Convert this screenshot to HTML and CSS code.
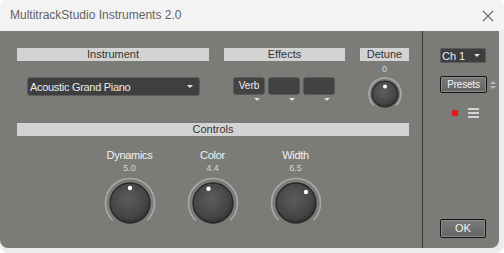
FILE: index.html
```html
<!DOCTYPE html>
<html>
<head>
<meta charset="utf-8">
<link rel="stylesheet" href="styles.css">
</head>
<body>
<div class="window">
  <div class="titlebar">
    <span class="title">MultitrackStudio Instruments 2.0</span>
    <svg class="close" width="12" height="12" viewBox="0 0 12 12"><path d="M1 1L11 11M11 1L1 11" stroke="#6a6a6a" stroke-width="1.1" fill="none"/></svg>
  </div>
  <div class="content">
    <div class="main">
      <div class="top">
        <div class="col">
          <div class="hdr">Instrument</div>
          <div class="select"><span>Acoustic Grand Piano</span><i class="tri"></i></div>
        </div>
        <div class="col">
          <div class="hdr">Effects</div>
          <div class="fx">
            <div class="fxslot"><div class="fxbtn">Verb</div><i class="tri"></i></div>
            <div class="fxslot"><div class="fxbtn"></div><i class="tri"></i></div>
            <div class="fxslot"><div class="fxbtn"></div><i class="tri"></i></div>
          </div>
        </div>
        <div class="col center">
          <div class="hdr">Detune</div>
          <div class="val small">0</div>
          <svg class="knob-s" width="34" height="34" viewBox="0 0 34 34">
            <defs>
              <radialGradient id="gs" cx="45%" cy="40%" r="60%"><stop offset="0" stop-color="#5e5e5e"/><stop offset="0.8" stop-color="#444"/><stop offset="1" stop-color="#303030"/></radialGradient>
            </defs>
            <path d="M5.7 28.3A16 16 0 1 1 28.3 28.3" stroke="#a9a9a9" stroke-width="1.6" fill="none"/>
            <circle cx="17" cy="17" r="13" fill="url(#gs)" stroke="#262626" stroke-width="1.2"/>
            <circle cx="17" cy="9.5" r="2" fill="#fff"/>
          </svg>
        </div>
      </div>
      <div class="hdr wide">Controls</div>
      <div class="knobs">
        <div class="kcol">
          <div class="klabel">Dynamics</div>
          <div class="val">5.0</div>
          <svg class="knob" width="52" height="52" viewBox="0 0 52 52">
            <defs>
              <radialGradient id="g1" cx="45%" cy="40%" r="62%"><stop offset="0" stop-color="#5c5c5c"/><stop offset="0.75" stop-color="#444"/><stop offset="1" stop-color="#2e2e2e"/></radialGradient>
            </defs>
            <path d="M8.7 43.3A24.5 24.5 0 1 1 43.3 43.3" stroke="#a8a8a8" stroke-width="1.6" fill="none"/>
            <circle cx="26" cy="26" r="20" fill="url(#g1)" stroke="#262626" stroke-width="1.3"/>
            <circle cx="26" cy="11" r="2.2" fill="#fff"/>
          </svg>
        </div>
        <div class="kcol">
          <div class="klabel">Color</div>
          <div class="val">4.4</div>
          <svg class="knob" width="52" height="52" viewBox="0 0 52 52">
            <path d="M8.7 43.3A24.5 24.5 0 1 1 43.3 43.3" stroke="#a8a8a8" stroke-width="1.6" fill="none"/>
            <circle cx="26" cy="26" r="20" fill="url(#g1)" stroke="#262626" stroke-width="1.3"/>
            <circle cx="21.5" cy="11.7" r="2.2" fill="#fff"/>
          </svg>
        </div>
        <div class="kcol">
          <div class="klabel">Width</div>
          <div class="val">6.5</div>
          <svg class="knob" width="52" height="52" viewBox="0 0 52 52">
            <path d="M8.7 43.3A24.5 24.5 0 1 1 43.3 43.3" stroke="#a8a8a8" stroke-width="1.6" fill="none"/>
            <circle cx="26" cy="26" r="20" fill="url(#g1)" stroke="#262626" stroke-width="1.3"/>
            <circle cx="36" cy="15" r="2.2" fill="#fff"/>
          </svg>
        </div>
      </div>
    </div>
    <div class="side">
      <div class="chsel"><span>Ch 1</span><i class="tri"></i></div>
      <div class="presets-row">
        <div class="btn presets">Presets</div>
        <div class="updown"><i class="up"></i><i class="down"></i></div>
      </div>
      <div class="status">
        <span class="rec"></span>
        <span class="menu"><i></i><i></i><i></i></span>
      </div>
      <div class="btn ok">OK</div>
    </div>
  </div>
</div>
</body>
</html>
```

FILE: styles.css
```css
html, body {
  margin: 0;
  padding: 0;
  background: #ffffff;
}
body {
  font-family: "Liberation Sans", Arial, sans-serif;
  width: 504px;
  height: 253px;
  overflow: hidden;
}
.window {
  width: 504px;
  height: 253px;
  box-sizing: border-box;
  border-radius: 8px;
  overflow: hidden;
  background: #ececec;
  display: flex;
  flex-direction: column;
}
.titlebar {
  height: 31px;
  flex: none;
  background: #f3f3f3;
  display: flex;
  align-items: center;
  justify-content: space-between;
  padding: 0 10px 0 10px;
}
.title {
  font-size: 12px;
  color: #626262;
  margin-top: -1px;
}
.content {
  height: 217px;
  flex: none;
  background: #7b7c78;
  display: flex;
  border-radius: 0 0 8px 8px;
  margin-right: 5px;
}
.main {
  width: 423px;
  box-sizing: border-box;
  padding: 17px 0 0 17px;
  border-right: 1px solid #3a3a38;
}
.top {
  display: grid;
  grid-template-columns: 192px 121px 49px;
  column-gap: 15px;
  height: 75px;
}
.col {
  display: flex;
  flex-direction: column;
}
.col.center {
  align-items: center;
}
.col.center .hdr {
  align-self: stretch;
}
.hdr {
  height: 13px;
  line-height: 13px;
  background: #d3d3d3;
  color: #333;
  font-size: 11px;
  text-align: center;
}
.hdr.wide {
  width: 392px;
}
.select {
  margin: 16px 0 0 10px;
  width: 173px;
  height: 19px;
  box-sizing: border-box;
  background: #3f3f3f;
  border: 1px solid #5c5c5c;
  border-radius: 3px;
  display: flex;
  align-items: center;
  justify-content: space-between;
  padding: 0 6px 0 2px;
  color: #ececec;
  font-size: 11px;
  letter-spacing: -0.3px;
}
.tri {
  display: block;
  width: 0;
  height: 0;
  border-left: 3px solid transparent;
  border-right: 3px solid transparent;
  border-top: 3px solid #e6e6e6;
}
.fx {
  display: flex;
  gap: 3px;
  margin: 16px 0 0 9px;
}
.fxslot {
  display: flex;
  flex-direction: column;
  align-items: flex-end;
}
.fxbtn {
  width: 32px;
  height: 18px;
  box-sizing: border-box;
  background: #424242;
  border: 1px solid #5a5a5a;
  border-radius: 3px;
  color: #f0f0f0;
  font-size: 10px;
  line-height: 16px;
  text-align: center;
}
.fxslot .tri {
  margin: 3px 5px 0 0;
  border-top-color: #dcdcdc;
}
.val {
  font-size: 9px;
  line-height: 11px;
  color: #d6d6d6;
  text-align: center;
}
.val.small {
  margin-top: 3px;
}
.knob-s {
  display: block;
  margin-top: 2px;
}
.knobs {
  display: flex;
  padding-left: 71px;
  padding-top: 13px;
}
.kcol {
  width: 83px;
  display: flex;
  flex-direction: column;
  align-items: center;
}
.klabel {
  font-size: 11px;
  line-height: 13px;
  color: #f2f2f2;
  letter-spacing: -0.3px;
}
.kcol .val {
  margin-top: 1px;
}
.knob {
  display: block;
  margin-top: 3px;
}
.side {
  flex: 1;
  display: flex;
  flex-direction: column;
  padding: 17px 0 10px 17px;
}
.chsel {
  width: 46px;
  height: 15px;
  box-sizing: border-box;
  background: #3e3e3e;
  border: 1px solid #5a5a5a;
  border-radius: 2px;
  display: flex;
  align-items: center;
  justify-content: space-between;
  padding: 0 5px 0 1px;
  color: #f0f0f0;
  font-size: 11px;
}
.presets-row {
  display: flex;
  align-items: center;
  margin-top: 13px;
  gap: 3px;
}
.btn {
  box-sizing: border-box;
  border: 1px solid #141414;
  border-radius: 2px;
  background: linear-gradient(#7a7a7a, #646464);
  box-shadow: inset 0 0 0 1px #8c8c8c;
  color: #f2f2f2;
  text-align: center;
}
.presets {
  width: 47px;
  height: 17px;
  font-size: 10px;
  line-height: 15px;
  letter-spacing: -0.2px;
}
.updown {
  display: flex;
  flex-direction: column;
  gap: 2px;
}
.updown i {
  display: block;
  width: 0;
  height: 0;
  border-left: 3px solid transparent;
  border-right: 3px solid transparent;
}
.updown .up {
  border-bottom: 3px solid #b8b8b8;
}
.updown .down {
  border-top: 3px solid #b8b8b8;
}
.status {
  display: flex;
  align-items: center;
  margin-top: 15px;
  padding-left: 12px;
  gap: 10px;
}
.rec {
  width: 6px;
  height: 6px;
  border-radius: 50%;
  background: #ff1010;
  box-shadow: 0 0 1px #700;
}
.menu {
  display: flex;
  flex-direction: column;
  gap: 2px;
}
.menu i {
  display: block;
  width: 11px;
  height: 2px;
  background: #d4d4d4;
}
.ok {
  margin-top: auto;
  width: 46px;
  height: 19px;
  font-size: 11px;
  line-height: 17px;
}
```
